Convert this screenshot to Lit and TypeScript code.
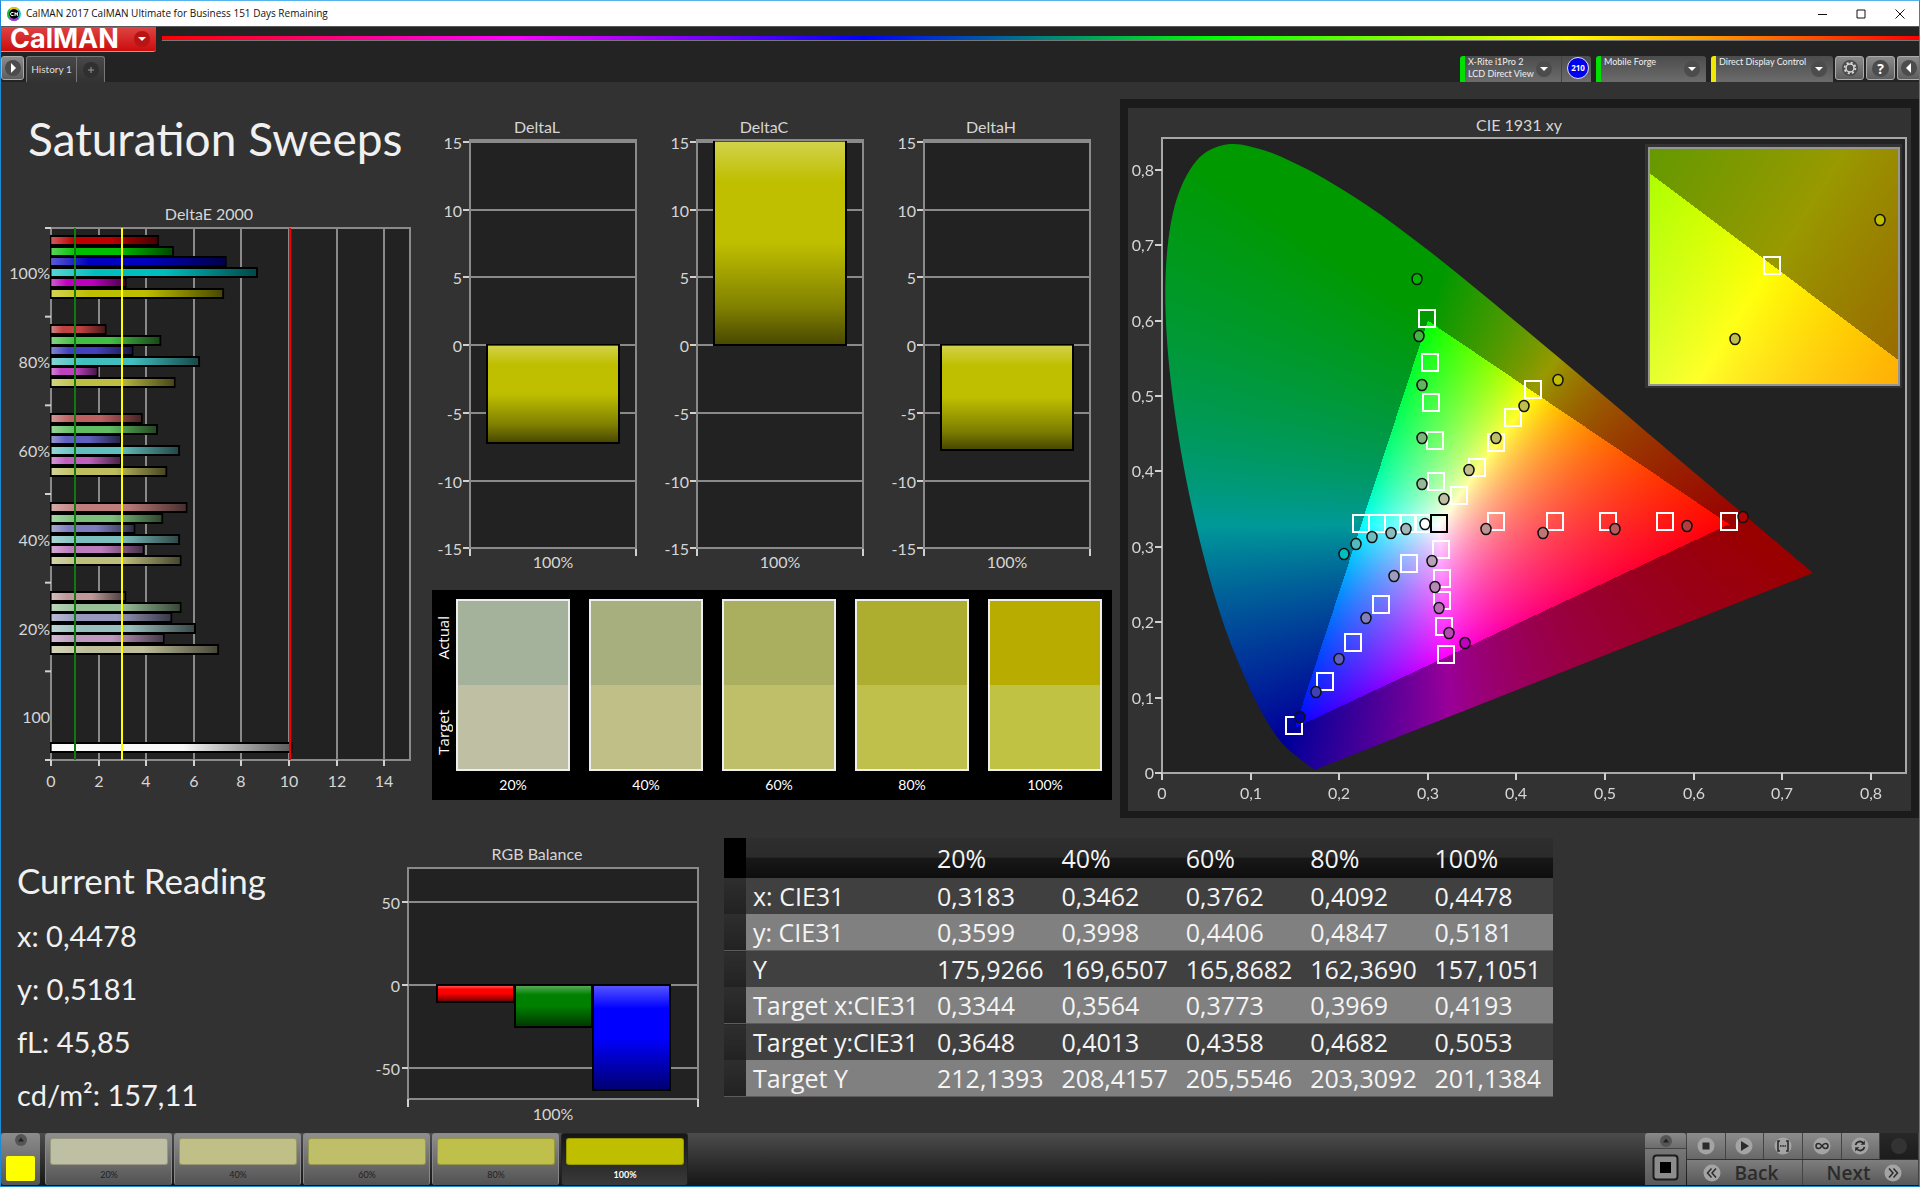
import { LitElement, html, svg, css } from "lit";
import { customElement, property } from "lit/decorators.js";

/* ------------------------------------------------------------------ data */

const SWEEP = ["20%", "40%", "60%", "80%", "100%"];

const TABLE: [string, string[]][] = [
  ["x: CIE31", ["0,3183", "0,3462", "0,3762", "0,4092", "0,4478"]],
  ["y: CIE31", ["0,3599", "0,3998", "0,4406", "0,4847", "0,5181"]],
  ["Y", ["175,9266", "169,6507", "165,8682", "162,3690", "157,1051"]],
  ["Target x:CIE31", ["0,3344", "0,3564", "0,3773", "0,3969", "0,4193"]],
  ["Target y:CIE31", ["0,3648", "0,4013", "0,4358", "0,4682", "0,5053"]],
  ["Target Y", ["212,1393", "208,4157", "205,5546", "203,3092", "201,1384"]],
];

const SWATCHES = [
  { label: "20%", actual: "#a4b19b", target: "#bfbfa3" },
  { label: "40%", actual: "#a7af7f", target: "#bfbf87" },
  { label: "60%", actual: "#aaae5f", target: "#bfbf69" },
  { label: "80%", actual: "#adad2f", target: "#bfbf4b" },
  { label: "100%", actual: "#b8ac00", target: "#bfc243" },
];

const PALETTE = ["#bfbfa3", "#bfbf87", "#bfbf69", "#bfbf4b", "#bfbf00"];

const HUES = [[1, 0, 0], [0, 1, 0], [0, 0, 1], [0, 1, 1], [1, 0, 1], [1, 1, 0]];

const DELTA_E = [
  { label: "100%", low: 0, values: [4.5, 5.12, 7.34, 8.65, 3.13, 7.23] },
  { label: "80%", low: 66, values: [2.29, 4.59, 3.42, 6.22, 1.95, 5.19] },
  { label: "60%", low: 96, values: [3.81, 4.45, 2.93, 5.38, 2.93, 4.84] },
  { label: "40%", low: 124, values: [5.69, 4.67, 3.5, 5.38, 3.88, 5.44] },
  { label: "20%", low: 152, values: [3.12, 5.44, 5.05, 6.05, 4.73, 7.02] },
];

type Point = [number, number];

const TARGETS: Point[] = [
  [0.2991, 0.6026], [0.3025, 0.5441], [0.304, 0.4906], [0.3081, 0.4397], [0.3096, 0.3861],
  [0.4184, 0.5074], [0.3958, 0.4702], [0.3766, 0.4374], [0.3555, 0.4047], [0.3348, 0.3675],
  [0.6396, 0.3325], [0.5674, 0.3325], [0.5038, 0.3325], [0.4432, 0.3325], [0.3766, 0.3325],
  [0.2246, 0.3308], [0.2426, 0.3308], [0.2603, 0.3308], [0.278, 0.3308], [0.2949, 0.3308],
  [0.3153, 0.2958], [0.3164, 0.2577], [0.3164, 0.2281], [0.3183, 0.1931], [0.3201, 0.1559],
  [0.2791, 0.2772], [0.2475, 0.2228], [0.2159, 0.1723], [0.1843, 0.1209], [0.1489, 0.0629],
];

const READINGS: [number, number, string][] = [
  [0.288, 0.6555, "#00b400"], [0.29, 0.5791, "#45b445"], [0.2938, 0.514, "#5fb45f"],
  [0.2938, 0.4441, "#7db47d"], [0.2938, 0.3839, "#98b898"],
  [0.4466, 0.5211, "#bfbf00"], [0.4086, 0.4861, "#bfbf4b"], [0.3766, 0.4441, "#bfbf69"],
  [0.3465, 0.4025, "#bfbf87"], [0.3186, 0.3631, "#bfbfa3"],
  [0.6554, 0.3392, "#b40000"], [0.5922, 0.3281, "#b43c3c"], [0.5113, 0.3232, "#b85a5a"],
  [0.43, 0.3184, "#bd7676"], [0.3657, 0.3232, "#bd9494"],
  [0.2972, 0.3308, "#ffffff"],
  [0.2757, 0.3232, "#a0b8b8"], [0.2588, 0.3184, "#8cbcbc"], [0.2374, 0.3135, "#70bcbc"],
  [0.2193, 0.3042, "#50bcbc"], [0.2054, 0.2909, "#00bfbf"],
  [0.3043, 0.2816, "#b8a0b8"], [0.3077, 0.2467, "#b888b8"], [0.313, 0.2183, "#b86cb8"],
  [0.3235, 0.186, "#b848b8"], [0.3416, 0.1723, "#bf00bf"],
  [0.2622, 0.2608, "#9c9cc0"], [0.2298, 0.2051, "#8080bc"], [0.2001, 0.1515, "#6060bc"],
  [0.1734, 0.1068, "#4040b8"], [0.1561, 0.074, "#0000b0"],
];

/* Spectral locus of the CIE 1931 2° observer. */
const LOCUS: Point[] = [
  [0.1741, 0.005], [0.1714, 0.0051], [0.1644, 0.0109], [0.1566, 0.0177], [0.144, 0.0297],
  [0.1355, 0.0399], [0.1241, 0.0578], [0.1096, 0.0868], [0.0913, 0.1327], [0.0687, 0.2007],
  [0.0454, 0.295], [0.0235, 0.4127], [0.0082, 0.5384], [0.0039, 0.6548], [0.0139, 0.7502],
  [0.0389, 0.812], [0.0743, 0.8338], [0.1142, 0.8262], [0.1547, 0.8059], [0.1929, 0.7816],
  [0.2296, 0.7543], [0.2658, 0.7243], [0.3016, 0.6923], [0.3373, 0.6589], [0.3731, 0.6245],
  [0.4087, 0.5896], [0.4441, 0.5547], [0.4788, 0.5202], [0.5125, 0.4866], [0.5448, 0.4544],
  [0.5752, 0.4242], [0.6029, 0.3965], [0.627, 0.3725], [0.6658, 0.334], [0.6915, 0.3083],
  [0.719, 0.2809], [0.7347, 0.2653],
];

/* ------------------------------------------------------- chromaticity fill */

const TONE = 0.85;
const OUTSIDE_GAMUT = 0.6;

function paintChromaticity(
  canvas: HTMLCanvasElement,
  toXY: (px: number, py: number) => Point,
  outline?: Point[],
) {
  const { width, height } = canvas;
  const buffer = document.createElement("canvas");
  buffer.width = width;
  buffer.height = height;
  const bctx = buffer.getContext("2d")!;
  const image = bctx.createImageData(width, height);
  for (let j = 0; j < height; j++) {
    for (let i = 0; i < width; i++) {
      const [x, y0] = toXY(i + 0.5, j + 0.5);
      const y = Math.max(y0, 0.0005);
      const X = x / y;
      const Z = (1 - x - y) / y;
      const rgb = [
        3.2406 * X - 1.5372 - 0.4986 * Z,
        -0.9689 * X + 1.8758 + 0.0415 * Z,
        0.0557 * X - 0.204 + 1.057 * Z,
      ];
      const inside = Math.min(...rgb) >= 0;
      const peak = Math.max(...rgb);
      const scale = inside ? 255 : 255 * OUTSIDE_GAMUT;
      const at = (j * width + i) * 4;
      for (let c = 0; c < 3; c++) {
        image.data[at + c] = Math.pow(Math.max(rgb[c], 0) / peak, TONE) * scale;
      }
      image.data[at + 3] = 255;
    }
  }
  bctx.putImageData(image, 0, 0);
  const ctx = canvas.getContext("2d")!;
  if (outline) {
    ctx.beginPath();
    const at = (k: number) => outline[Math.min(Math.max(k, 0), outline.length - 1)];
    ctx.moveTo(outline[0][0], outline[0][1]);
    for (let k = 0; k < outline.length - 1; k++) {
      const [a, b, c, d] = [at(k - 1), at(k), at(k + 1), at(k + 2)];
      ctx.bezierCurveTo(
        b[0] + (c[0] - a[0]) / 6, b[1] + (c[1] - a[1]) / 6,
        c[0] - (d[0] - b[0]) / 6, c[1] - (d[1] - b[1]) / 6,
        c[0], c[1],
      );
    }
    ctx.closePath();
    ctx.clip();
  }
  ctx.drawImage(buffer, 0, 0);
}

/* ------------------------------------------------------------ shared style */

const chartStyles = css`
  :host {
    display: block;
    font-family: Lato, "Open Sans", sans-serif;
  }
  svg {
    display: block;
    width: 100%;
    height: auto;
  }
  text {
    fill: #d6d6d6;
    font-size: 16px;
  }
  .title { font-size: 16px; text-anchor: middle; }
  .mid { text-anchor: middle; }
  .end { text-anchor: end; }
  .plot { fill: #222; }
  .grid { stroke: #8a8a8a; stroke-width: 2; }
  .line { fill: none; }
  .tick { stroke: #d0d0d0; stroke-width: 2; fill: none; }
  .bar { stroke: #000; stroke-width: 2; }
`;

/* -------------------------------------------------------------- Delta E */

@customElement("delta-e-chart")
class DeltaEChart extends LitElement {
  static styles = chartStyles;

  render() {
    const left = 50;
    const top = 28;
    const right = 409;
    const bottom = 560;
    const x = (v: number) => left + Math.round(v * 23.8);
    const pitch = (bottom - top) / 6;
    const bar = (y: number, v: number, fill: string) => svg`
      <rect class="bar" x=${left} y=${y} width=${v * 23.8} height="9" fill=${fill} />
      <rect x=${left} y=${y + 1} width=${v * 23.8 - 1} height="7" fill="url(#shade)" />`;
    return html`
      <svg viewBox="0 0 431 600" role="img" aria-label="DeltaE 2000">
        <defs>
          <linearGradient id="shade">
            <stop offset="0" stop-color="#fff" stop-opacity="0.35" />
            <stop offset="0.22" stop-color="#fff" stop-opacity="0" />
            <stop offset="0.55" stop-color="#000" stop-opacity="0" />
            <stop offset="1" stop-color="#000" stop-opacity="0.62" />
          </linearGradient>
        </defs>
        <text class="title" x="208" y="20">DeltaE 2000</text>
        <rect class="plot grid" x=${left} y=${top} width=${right - left} height=${bottom - top} />
        ${[2, 4, 6, 8, 10, 12, 14].map((v) => svg`
          <path class="grid" d="M${x(v)} ${top}V${bottom}" />
          <path class="tick" d="M${x(v)} ${bottom}v6" />`)}
        <path class="tick" d="M${left} ${bottom}v6" />
        ${[0, 1, 2, 3, 4, 5, 6].map((k) => svg`
          <path class="tick" d="M${left - 6} ${top + k * pitch}h6" />`)}
        ${DELTA_E.map((group, g) => svg`
          <text class="end" x="49" y=${79 + g * 89}>${group.label}</text>
          ${group.values.map((v, k) => bar(
            Math.round(36 + g * 89 + k * 10.5), v,
            `rgb(${HUES[k].map((on) => (on ? 190 : group.low)).join(",")})`,
          ))}`)}
        <text class="end" x="49" y="523">100</text>
        ${bar(543, 10.1, "#f8f8f8")}
        <path d="M${x(1)} ${top}V${bottom}" stroke="#107a10" stroke-width="2" />
        <path d="M${x(3)} ${top}V${bottom}" stroke="#ffff00" stroke-width="2" />
        <path d="M${x(10) + 1} ${top}V${bottom}" stroke="#f00000" stroke-width="2" />
        ${[0, 2, 4, 6, 8, 10, 12, 14].map((v) => svg`
          <text class="mid" x=${x(v)} y="587">${v}</text>`)}
      </svg>`;
  }
}

/* ------------------------------------------------------ single-bar deltas */

@customElement("delta-chart")
class DeltaChart extends LitElement {
  static styles = chartStyles;

  @property() label = "";
  @property({ type: Number }) value = 0;

  render() {
    const top = 58;
    const bottom = 466;
    const zero = 263;
    const y = (v: number) => Math.round(zero - v * 13.55);
    const end = Math.max(y(this.value), top + 1);
    const y0 = Math.min(zero, end);
    const height = Math.abs(zero - end);
    return html`
      <svg viewBox="0 0 227 508" role="img" aria-label=${this.label}>
        <defs>
          <linearGradient id="shade" x2="0" y2="1">
            <stop offset="0" stop-color="#fff" stop-opacity="0.3" />
            <stop offset="0.2" stop-color="#fff" stop-opacity="0" />
            <stop offset="0.5" stop-color="#000" stop-opacity="0" />
            <stop offset="0.82" stop-color="#000" stop-opacity="0.33" />
            <stop offset="1" stop-color="#000" stop-opacity="0.62" />
          </linearGradient>
        </defs>
        <text class="title" x="105" y="51">${this.label}</text>
        <rect class="plot" x="38" y=${top} width="166" height=${bottom - top} />
        ${[15, 10, 5, 0, -5, -10, -15].map((v) => svg`
          <path class="grid" d="M38 ${y(v)}h166" />
          <path class="tick" d="M31 ${y(v)}h7" />
          <text class="end" x="30" y=${y(v) + 7}>${v}</text>`)}
        <path class="tick" d="M38 ${bottom}v8M204 ${bottom}v8" />
        <rect class="bar" x="55" y=${y0} width="132" height=${height} fill="#bfbf00" />
        <rect x="56" y=${y0} width="130" height=${height - 1} fill="url(#shade)" />
        <rect class="grid line" x="38" y=${top} width="166" height=${bottom - top} />
        <text class="mid" x="121" y="486">100%</text>
      </svg>`;
  }
}

/* ------------------------------------------------------------ RGB balance */

@customElement("rgb-balance")
class RgbBalance extends LitElement {
  static styles = chartStyles;

  render() {
    const zero = 167;
    const y = (v: number) => Math.round(zero - v * 1.66);
    const bars: [number, string][] = [[-10.4, "#ff0000"], [-25.5, "#008000"], [-63.5, "#0000ff"]];
    return html`
      <svg viewBox="0 0 324 315" role="img" aria-label="RGB Balance">
        <defs>
          <linearGradient id="shade" x2="0" y2="1">
            <stop offset="0" stop-color="#fff" stop-opacity="0.33" />
            <stop offset="0.22" stop-color="#fff" stop-opacity="0" />
            <stop offset="0.5" stop-color="#000" stop-opacity="0" />
            <stop offset="1" stop-color="#000" stop-opacity="0.55" />
          </linearGradient>
        </defs>
        <text class="title" x="137" y="42">RGB Balance</text>
        <rect class="plot grid" x="8" y="50" width="290" height="231" />
        <path class="tick" d="M8 281v8M298 281v8" />
        ${[50, 0, -50].map((v) => svg`
          <path class="grid" d="M8 ${y(v)}h290" />
          <path class="tick" d="M2 ${y(v)}h6" />`)}
        ${bars.map(([v, fill], k) => svg`
          <rect class="bar" x=${37 + k * 78} y=${zero} width="77" height=${y(v) - zero} fill=${fill} />
          <rect x=${38 + k * 78} y=${zero + 1} width="75" height=${y(v) - zero - 2} fill="url(#shade)" />`)}
        <text class="mid" x="153" y="302">100%</text>
      </svg>`;
  }
}

/* -------------------------------------------------------------- CIE chart */

@customElement("cie-chart")
class CieChart extends LitElement {
  static styles = [
    chartStyles,
    css`
      canvas { display: block; }
      .axis { stroke: #a8a8a8; stroke-width: 2; fill: none; }
      .target { stroke: #fff; stroke-width: 2; fill: none; }
      .white-point { stroke: #000; stroke-width: 2; fill: none; }
      .reading { stroke: #111; stroke-width: 1.5; }
      .inset { stroke: #969696; stroke-width: 2; fill: none; }
      .halo { fill: #323232; }
    `,
  ];

  firstUpdated() {
    const [main, inset] = Array.from(this.renderRoot.querySelectorAll("canvas"));
    paintChromaticity(
      main,
      (px, py) => [px / 886, (634 - py) / 754],
      LOCUS.map(([x, y]) => [x * 886, 634 - y * 754] as Point),
    );
    paintChromaticity(inset, (px, py) => [
      0.4193 + (px - 123) / 3790,
      0.5053 - (py - 117) / 3586,
    ]);
  }

  render() {
    const left = 34;
    const bottom = 665;
    const x = (v: number) => Math.round(left + v * 886);
    const y = (v: number) => Math.round(bottom - v * 754);
    const ticks = [0, 1, 2, 3, 4, 5, 6, 7, 8];
    const name = (k: number) => (k ? `0,${k}` : "0");
    const square = (cx: number, cy: number, cls = "target") => svg`
      <rect class=${cls} x=${cx - 8} y=${cy - 9} width="16" height="17" />`;
    const dot = (cx: number, cy: number, fill: string) => svg`
      <ellipse class="reading" cx=${cx} cy=${cy} rx="5" ry="5.5" fill=${fill} />`;
    return html`
      <svg viewBox="0 0 783 703" role="img" aria-label="CIE 1931 xy">
        <text class="title" x="391" y="23">CIE 1931 xy</text>
        <rect class="plot" x=${left} y="30" width="744" height="635" />
        <foreignObject x=${left} y="31" width="744" height="634">
          <canvas width="744" height="634"></canvas>
        </foreignObject>
        <rect class="axis" x=${left} y="30" width="744" height="635" />
        ${ticks.map((k) => svg`
          <path class="tick" d="M${x(k / 10)} ${bottom}v7M${left - 7} ${y(k / 10)}h7" />
          <text class="mid" x=${x(k / 10)} y="691">${name(k)}</text>
          <text class="end" x=${left - 8} y=${y(k / 10) + 6}>${name(k)}</text>`)}
        ${TARGETS.map(([a, b]) => square(x(a), y(b)))}
        ${READINGS.map(([a, b, fill]) => dot(x(a), y(b), fill))}
        ${square(x(0.313), y(0.3308), "white-point")}
        <rect class="halo" x="517" y="36" width="257" height="244" />
        <foreignObject x="521" y="40" width="250" height="237">
          <canvas width="250" height="237"></canvas>
        </foreignObject>
        <rect class="inset" x="521" y="40" width="250" height="237" />
        ${square(644, 158)}
        ${dot(752, 112, "#bfbf00")}
        ${dot(607, 231, "#bfbf4b")}
      </svg>`;
  }
}

/* ------------------------------------------------------------------ icons */

const triDown = html`<svg class="icon" viewBox="0 0 16 16"><circle class="well" cx="8" cy="8" r="8"/><path fill="#fff" d="M4 6h8l-4 4z"/></svg>`;
const playWell = html`<svg class="icon" viewBox="0 0 18 18"><circle class="well" cx="9" cy="9" r="8"/><path fill="#fff" d="M7 4l5 5-5 5z"/></svg>`;
const backWell = html`<svg class="icon" viewBox="0 0 18 18"><circle class="well" cx="9" cy="9" r="8"/><path fill="#fff" d="M11 4l-5 5 5 5z"/></svg>`;
const plusWell = html`<svg class="icon" viewBox="0 0 16 16"><circle cx="8" cy="8" r="8" fill="#303030"/><path stroke="#999" d="M8 5v6M5 8h6"/></svg>`;
const gear = html`<svg class="icon" viewBox="0 0 18 18"><circle class="well" cx="9" cy="9" r="8"/><circle cx="9" cy="9" r="4" fill="none" stroke="#d8d8d8" stroke-width="1.5"/><circle cx="9" cy="9" r="5.4" fill="none" stroke="#d8d8d8" stroke-width="1.8" stroke-dasharray="2.1 2.14"/></svg>`;
const upWell = html`<svg class="icon-s" viewBox="0 0 12 12"><circle cx="6" cy="6" r="6" fill="#555"/><path fill="#222" d="M3 7.5h6l-3-4z"/></svg>`;

const transport = {
  stop: html`<svg class="icon" viewBox="0 0 18 18"><circle cx="9" cy="9" r="8.5" fill="#a4a4a4"/><path fill="#2b2b2b" d="M5.5 5.5h7v7h-7z"/></svg>`,
  play: html`<svg class="icon" viewBox="0 0 18 18"><circle cx="9" cy="9" r="8.5" fill="#a4a4a4"/><path fill="#2b2b2b" d="M6 4l8 5-8 5z"/></svg>`,
  range: html`<svg class="icon" viewBox="0 0 18 18"><circle cx="9" cy="9" r="8.5" fill="#a4a4a4"/><path fill="none" stroke="#2b2b2b" stroke-width="1.6" d="M6 4H4v10h2M12 4h2v10h-2"/><path fill="#2b2b2b" d="M6 8.2h1.6v1.6H6zM8.3 8.2h1.6v1.6H8.3zM10.5 8.2h1.6v1.6h-1.6z"/></svg>`,
  loop: html`<svg class="icon" viewBox="0 0 18 18"><circle cx="9" cy="9" r="8.5" fill="#a4a4a4"/><path fill="none" stroke="#2b2b2b" stroke-width="1.5" d="M9 9C7.5 7 6.6 6.5 5.5 6.5a2.5 2.5 0 0 0 0 5C6.6 11.5 7.5 11 9 9s2.4-2.5 3.5-2.5a2.5 2.5 0 0 1 0 5C11.4 11.5 10.5 11 9 9z"/></svg>`,
  refresh: html`<svg class="icon" viewBox="0 0 18 18"><circle cx="9" cy="9" r="8.5" fill="#a4a4a4"/><path fill="none" stroke="#2b2b2b" stroke-width="1.8" d="M4.5 8a4.5 4.5 0 0 1 7.7-2M13.5 10a4.5 4.5 0 0 1-7.7 2"/><path fill="#2b2b2b" d="M13.8 3.5v4.2H9.6zM4.2 14.5v-4.2h4.2z"/></svg>`,
};
const chevrons = (flip: boolean) => html`<svg class="icon" viewBox="0 0 18 18"><circle cx="9" cy="9" r="8.5" fill="#a4a4a4"/><path fill="none" stroke="#2b2b2b" stroke-width="1.5" d=${flip ? "M5 4.5l4 4.5-4 4.5M9.5 4.5l4 4.5-4 4.5" : "M8.5 4.5l-4 4.5 4 4.5M13 4.5l-4 4.5 4 4.5"} /></svg>`;

/* --------------------------------------------------------------- app root */

@customElement("app-root")
class AppRoot extends LitElement {
  static styles = css`
    :host {
      display: block;
      font-family: Lato, "Open Sans", sans-serif;
      color: #f0f0f0;
    }
    * { box-sizing: border-box; }
    button { font: inherit; color: inherit; border: 0; padding: 0; margin: 0; background: none; }
    h1, h2, p { margin: 0; font-weight: 400; }

    .window {
      display: flex;
      flex-direction: column;
      min-height: 100vh;
      background: #323232;
      border: 1px solid #1c8ad6;
      border-top-color: #55b2ea;
    }

    .titlebar {
      display: flex;
      align-items: center;
      height: 25px;
      padding-left: 6px;
      background: #fff;
      color: #111;
      font: 10px/23px "Open Sans", sans-serif;
    }
    .titlebar .app-icon { width: 14px; height: 14px; margin-right: 5px; }
    .titlebar .caption { flex: 1; }
    .titlebar button { width: 39px; height: 25px; display: grid; place-items: center; }
    .titlebar button svg { width: 10px; height: 10px; }

    .header { background: #232323; border-top: 1px solid #5a5a5a; }
    .brand-row { display: flex; align-items: flex-start; gap: 6px; height: 29px; }
    .brand {
      display: flex;
      align-items: center;
      width: 155px;
      height: 25px;
      padding: 0 6px 0 9px;
      justify-content: space-between;
      border-radius: 0 0 3px 0;
      border-bottom: 1px solid #e88;
      background: linear-gradient(#de4444, #cc0c0c);
      color: #fff;
      font: 700 27px/24px Inter, sans-serif;
    }
    .brand .icon { width: 16px; height: 16px; }
    .brand .well { fill: #b81414; }
    .spectrum {
      flex: 1;
      height: 5px;
      margin-top: 9px;
      border-bottom: 1px solid #777;
      background: linear-gradient(90deg, #f00, #f0f 20%, #00f 40%, #0f0 60%, #ff0 80%, #f00);
    }

    .tab-row { display: flex; align-items: flex-start; height: 26px; font-size: 10px; }
    .tab-row .grow { flex: 1; }
    .tab-row .icon { flex: none; }
    .square {
      display: grid;
      place-items: center;
      width: 29px;
      height: 24px;
      border: 1px solid #aaa;
      border-radius: 3px;
      background: linear-gradient(#8a8a8a, #5e5e5e);
    }
    .square .icon { width: 18px; height: 18px; }
    .square.edge { width: 23px; }
    .square.cut { width: 22px; border-right: 0; border-radius: 3px 0 0 3px; }
    .well { fill: #4c4c4c; }
    .help { width: 17px; height: 17px; border-radius: 50%; background: #4c4c4c; color: #fff; font: 700 14px/17px "Open Sans", sans-serif; text-align: center; }
    .tabs {
      display: flex;
      height: 26px;
      margin-left: 2px;
      border: 1px solid #777;
      border-bottom: 0;
      border-radius: 3px 3px 0 0;
      background: linear-gradient(#484848, #323232);
    }
    .tab { width: 49px; color: #ddd; line-height: 25px; text-align: center; white-space: nowrap; }
    .tab.add { display: grid; place-items: center; width: 28px; border-left: 1px solid #777; }
    .tab.add .icon { width: 16px; height: 16px; }
    .devices { display: flex; gap: 5px; margin-right: 2px; }
    .device {
      display: flex;
      align-items: center;
      height: 26px;
      padding-right: 6px;
      border-left: 5px solid #00e000;
      border-radius: 3px 3px 0 0;
      background: linear-gradient(#4c4c4c, #6c6c6c);
      text-align: left;
      font-size: 9px;
      line-height: 12px;
    }
    .device.pattern { border-left-color: #f0e800; }
    .device .name { align-self: flex-start; flex: 1; min-width: 0; padding-left: 3px; white-space: nowrap; }
    .device .icon { width: 16px; height: 16px; }
    .meter { width: 101px; border-top-right-radius: 0; padding-right: 9px; }
    .source { width: 110px; }
    .display { width: 122px; }
    .meter-group { display: flex; }
    .count { width: 30px; height: 26px; padding: 1px 0 0 5px; border-left: 1px solid #444; border-radius: 0 3px 0 0; background: linear-gradient(#4c4c4c, #6c6c6c); }
    .badge {
      display: block;
      width: 22px;
      height: 22px;
      border: 1px solid #dde;
      border-radius: 50%;
      background: #0000f0;
      color: #fff;
      font: 700 8px/20px "Open Sans", sans-serif;
      text-align: center;
    }
    .buttons { display: flex; gap: 2px; }

    .main { flex: 1; }
    .upper { display: grid; grid-template-columns: 431fr 688fr 799fr; }
    .lower { display: grid; grid-template-columns: 353fr 46fr 324fr 829fr 366fr; align-items: start; }
    .heading { padding: 27px 0 31px 27px; font-size: 46px; line-height: 60px; white-space: nowrap; }

    .deltas { display: grid; grid-template-columns: repeat(3, 1fr); padding-right: 7px; }
    .comparator {
      display: flex;
      gap: 5px;
      margin-right: 8px;
      padding: 9px 10px 0 3px;
      height: 210px;
      background: #000;
      color: #fff;
    }
    .pairs { flex: 1; display: grid; grid-template-columns: repeat(5, 1fr); column-gap: 19px; }
    .sides { display: grid; grid-template-rows: 78px 110px; width: 16px; }
    .sides span {
      writing-mode: vertical-rl;
      rotate: 180deg;
      place-self: center;
      font: 500 15px/16px "Open Sans", sans-serif;
    }
    .pair { margin: 0; }
    .pair .colors { height: 172px; border: 2px solid #eee; display: grid; grid-template-rows: 1fr 1fr; }
    .pair figcaption { font-size: 14px; line-height: 27px; text-align: center; }

    .cie-frame { padding: 9px 8px 7px; background: #1b1b1b; margin-top: 17px; }
    .cie-body { background: #323232; }

    .reading { padding: 35px 0 0 16px; }
    .reading h2 { font-size: 35px; line-height: 54px; margin-bottom: 2px; white-space: nowrap; }
    .reading p { font-size: 29px; line-height: 53px; }
    .axis-labels {
      display: grid;
      grid-template-rows: repeat(3, 83px);
      padding-top: 43px;
      color: #d6d6d6;
      font-size: 16px;
      text-align: right;
      align-items: center;
    }

    table {
      margin-top: 20px;
      width: 100%;
      border-collapse: collapse;
      table-layout: fixed;
      color: #f4f4f4;
      font: 25px/36px "Open Sans", sans-serif;
      text-align: left;
    }
    th, td { padding: 0 0 0 6px; font-weight: 400; white-space: nowrap; }
    tbody th { padding-left: 7px; }
    thead th { height: 40px; background: linear-gradient(#2e2e2e 0, #2b2b2b 48%, #181818 50%, #0e0e0e); }
    thead .handle { background: #000; }
    .handle { width: 22px; padding: 0; background: linear-gradient(#2e2e2e, #222); }
    .row-name { width: 185px; }
    tbody tr { background: #404040; }
    tbody tr:nth-child(even) { background: #808080; }
    tbody tr:nth-child(even) td, tbody tr:nth-child(even) th { border-bottom: 1px solid #5c5c5c; }

    .footer {
      display: flex;
      height: 53px;
      padding-bottom: 1px;
      background: linear-gradient(#4c4c4c, #161616);
    }
    .footer .grow { flex: 1; }
    .current {
      display: flex;
      flex-direction: column;
      align-items: center;
      justify-content: space-between;
      width: 39px;
      padding: 1px 0 4px;
      border-radius: 3px;
      background: linear-gradient(#8c8c8c, #555);
    }
    .icon-s { width: 12px; height: 12px; }
    .chip { width: 29px; height: 25px; border-radius: 2px; background: #ff0; }
    .palette { display: flex; gap: 2px; margin-left: 5px; }
    .patch {
      display: flex;
      flex-direction: column;
      width: 127px;
      padding: 4px 3px 0 4px;
      border: 1px solid #888;
      border-bottom: 0;
      border-radius: 3px;
      background: linear-gradient(#8e8e8e, #525252);
      color: #222;
      font-size: 9px;
      line-height: 20px;
      text-align: center;
    }
    .patch .fill { height: 31px; border: 1px solid #0003; border-radius: 3px; }
    .patch.on { background: linear-gradient(#161616, #3a3a3a); border-color: #222; color: #fff; font-weight: 700; }
    .square-toggle { display: flex; flex-direction: column; width: 41px; margin-right: 1px; }
    .square-toggle button { display: grid; place-items: center; background: linear-gradient(#8a8a8a, #6c6c6c); }
    .square-toggle .up { height: 16px; border-bottom: 1px solid #444; border-radius: 3px 3px 0 0; }
    .square-toggle .big { flex: 1; background: linear-gradient(#777, #5a5a5a); }
    .square-toggle .big svg { width: 27px; height: 27px; }
    .transport { display: grid; grid-template-columns: repeat(6, 1fr); grid-template-rows: 26px 25px; width: 232px; row-gap: 1px; }
    .transport button { display: flex; align-items: center; justify-content: center; border-right: 1px solid #444; background: linear-gradient(#8c8c8c, #686868); }
    .transport .icon { width: 18px; height: 18px; }
    .transport .off { background: linear-gradient(#282828, #1c1c1c); }
    .transport .nav { grid-column: span 3; gap: 14px; color: #2b2b2b; font: 600 19px/24px "Open Sans", sans-serif; background: linear-gradient(#7e7e7e, #585858); }
    .transport .back { padding-right: 8px; }
    .transport .next { padding-left: 8px; }
  `;

  render() {
    return html`
      <div class="window">
        <div class="titlebar">
          <svg class="app-icon" viewBox="0 0 14 14">
            <circle cx="7" cy="7" r="6" fill="#000" stroke="#18c8c8" stroke-width="2" />
            <path d="M2.8 2.8A6 6 0 0 1 11.2 2.8" fill="none" stroke="#e8c010" stroke-width="2" />
            <path d="M2.8 2.8A6 6 0 0 0 2.8 11.2" fill="none" stroke="#18c030" stroke-width="2" />
            <path d="M2.8 11.2A6 6 0 0 0 11.2 11.2" fill="none" stroke="#c020e0" stroke-width="2" />
            <path d="M6.5 5.5H5a1.5 1.5 0 0 0 0 3h1.5M8 9V5.5l1.2 2 1.2-2V9" fill="none" stroke="#fff" />
          </svg>
          <span class="caption">CalMAN 2017 CalMAN Ultimate for Business 151 Days Remaining</span>
          <button aria-label="Minimize"><svg viewBox="0 0 10 10"><path d="M1 5.5h9" stroke="#111" /></svg></button>
          <button aria-label="Maximize"><svg viewBox="0 0 10 10"><path d="M1 1h8v8H1z" fill="none" stroke="#111" /></svg></button>
          <button aria-label="Close"><svg viewBox="0 0 10 10"><path d="M.5.5l9 9M9.5.5l-9 9" stroke="#111" /></svg></button>
        </div>

        <div class="header">
          <div class="brand-row">
            <button class="brand"><span>CalMAN</span>${triDown}</button>
            <div class="spectrum"></div>
          </div>
          <div class="tab-row">
            <button class="square edge" aria-label="Expand">${playWell}</button>
            <div class="tabs">
              <button class="tab">History 1</button>
              <button class="tab add" aria-label="Add tab">${plusWell}</button>
            </div>
            <div class="grow"></div>
            <div class="devices">
              <div class="meter-group">
                <button class="device meter"><span class="name">X-Rite i1Pro 2<br />LCD Direct View</span>${triDown}</button>
                <div class="count"><span class="badge">210</span></div>
              </div>
              <button class="device source"><span class="name">Mobile Forge</span>${triDown}</button>
              <button class="device pattern display"><span class="name">Direct Display Control</span>${triDown}</button>
            </div>
            <div class="buttons">
              <button class="square" aria-label="Settings">${gear}</button>
              <button class="square"><span class="help">?</span></button>
              <button class="square cut" aria-label="Collapse">${backWell}</button>
            </div>
          </div>
        </div>

        <main class="main">
          <div class="upper">
            <div>
              <h1 class="heading">Saturation Sweeps</h1>
              <delta-e-chart></delta-e-chart>
            </div>
            <div>
              <div class="deltas">
                <delta-chart label="DeltaL" .value=${-7.25}></delta-chart>
                <delta-chart label="DeltaC" .value=${16}></delta-chart>
                <delta-chart label="DeltaH" .value=${-7.75}></delta-chart>
              </div>
              <div class="comparator">
                <div class="sides"><span>Actual</span><span>Target</span></div>
                <div class="pairs">
                  ${SWATCHES.map((s) => html`
                    <figure class="pair">
                      <div class="colors">
                        <div style="background:${s.actual}"></div>
                        <div style="background:${s.target}"></div>
                      </div>
                      <figcaption>${s.label}</figcaption>
                    </figure>`)}
                </div>
              </div>
            </div>
            <div class="cie-frame">
              <div class="cie-body"><cie-chart></cie-chart></div>
            </div>
          </div>

          <div class="lower">
            <section class="reading">
              <h2>Current Reading</h2>
              <p>x: 0,4478</p>
              <p>y: 0,5181</p>
              <p>fL: 45,85</p>
              <p>cd/m²: 157,11</p>
            </section>
            <div class="axis-labels"><span>50</span><span>0</span><span>-50</span></div>
            <rgb-balance></rgb-balance>
            <table>
              <thead>
                <tr>
                  <th class="handle"></th>
                  <th class="row-name"></th>
                  ${SWEEP.map((s) => html`<th scope="col">${s}</th>`)}
                </tr>
              </thead>
              <tbody>
                ${TABLE.map(([name, cells]) => html`
                  <tr>
                    <td class="handle"></td>
                    <th scope="row">${name}</th>
                    ${cells.map((c) => html`<td>${c}</td>`)}
                  </tr>`)}
              </tbody>
            </table>
          </div>
        </main>

        <div class="footer">
          <button class="current" aria-label="Current color">${upWell}<span class="chip"></span></button>
          <div class="palette">
            ${SWEEP.map((s, i) => html`
              <button class="patch ${i === 4 ? "on" : ""}">
                <span class="fill" style="background:${PALETTE[i]}"></span>${s}
              </button>`)}
          </div>
          <div class="grow"></div>
          <div class="square-toggle">
            <button class="up" aria-label="Expand">${upWell}</button>
            <button class="big" aria-label="Pattern window">
              <svg viewBox="0 0 27 27"><rect x="1.5" y="1.5" width="24" height="24" rx="3" fill="#8c8c8c" stroke="#1c1c1c" stroke-width="2" /><path d="M8 8h11v11H8z" fill="#000" /></svg>
            </button>
          </div>
          <div class="transport">
            <button aria-label="Stop">${transport.stop}</button>
            <button aria-label="Play">${transport.play}</button>
            <button aria-label="Read series">${transport.range}</button>
            <button aria-label="Continuous">${transport.loop}</button>
            <button aria-label="Refresh">${transport.refresh}</button>
            <button class="off" aria-label="Idle"><svg class="icon" viewBox="0 0 18 18"><circle cx="9" cy="9" r="8" fill="#333" /></svg></button>
            <button class="nav back">${chevrons(false)}<span>Back</span></button>
            <button class="nav next"><span>Next</span>${chevrons(true)}</button>
          </div>
        </div>
      </div>`;
  }
}
